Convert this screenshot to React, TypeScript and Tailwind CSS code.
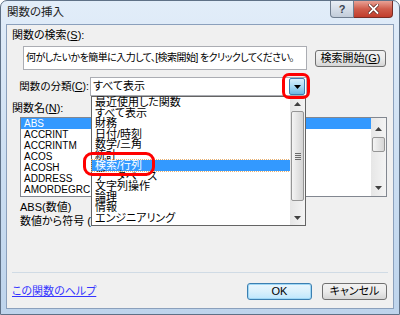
import React from "react";

const F = "font-['Liberation_Sans','Noto_Sans_CJK_JP',sans-serif] [font-feature-settings:'palt']";

function UpArrow() {
  return (
    <svg width="7" height="4" viewBox="0 0 7 4">
      <path d="M0 4 L3.5 0 L7 4Z" fill="#404040" />
    </svg>
  );
}
function DownArrow({ c = "#404040" }: { c?: string }) {
  return (
    <svg width="7" height="4" viewBox="0 0 7 4">
      <path d="M0 0 L3.5 4 L7 0Z" fill={c} />
    </svg>
  );
}

const cats = [
  "最近使用した関数",
  "すべて表示",
  "財務",
  "日付/時刻",
  "数学/三角",
  "統計",
  "検索/行列",
  "データベース",
  "文字列操作",
  "論理",
  "情報",
  "エンジニアリング",
];

const funcs = ["ABS", "ACCRINT", "ACCRINTM", "ACOS", "ACOSH", "ADDRESS", "AMORDEGRC"];

export default function App() {
  return (
    <div className={`w-[400px] h-[315px] ${F} text-[11px] text-black`}>
      <div className="w-[400px] h-[315px] relative overflow-hidden flex flex-col border border-[#5f7187] rounded-t-[7px] bg-gradient-to-b from-[#e2edf9] via-[#cddff2] to-[#bed4ec]">
        {/* Title bar */}
        <div className="h-[23px] flex items-start shrink-0">
          <div className="pl-[6px] pt-[5px] leading-[13px] text-[11.5px] text-[#1e1e1e]">関数の挿入</div>
          <div className="ml-auto mr-[6px] flex">
            <div className="w-[24px] h-[17px] border border-[#6f7d8f] border-t-0 rounded-bl-[4px] bg-gradient-to-b from-[#e9eef5] via-[#d5dde8] to-[#c2ccd9] flex items-center justify-center text-[11px] leading-none font-bold text-[#3a4250]">
              ?
            </div>
            <div className="w-[39px] h-[17px] border border-[#7a2c24] border-l-0 border-t-0 rounded-br-[4px] bg-gradient-to-b from-[#e8a195] via-[#cf5c4b] to-[#c13d2c] flex items-center justify-center">
              <svg width="11" height="10" viewBox="0 0 11 10">
                <path d="M1.5 1 L9.5 9 M9.5 1 L1.5 9" stroke="#5a1f18" strokeWidth="3.2" strokeLinecap="square" />
                <path d="M1.5 1 L9.5 9 M9.5 1 L1.5 9" stroke="#ffffff" strokeWidth="1.8" strokeLinecap="square" />
              </svg>
            </div>
          </div>
        </div>

        {/* Client area */}
        <div className="mx-[5px] mb-[5px] flex-1 bg-[#f0f0f0] border border-[#8ba0bc] relative flex flex-col">
          <div className="pl-[5px] pt-[4px] leading-[13px]">
            関数の検索(<span className="underline">S</span>):
          </div>
          <div className="flex items-start mt-[4px]">
            <div className="ml-[16px] w-[284px] h-[24px] bg-white border border-[#abadb3] pl-[2px] pt-[4px] leading-[13px] text-[10px] tracking-[-0.55px] whitespace-nowrap overflow-hidden">
              何がしたいかを簡単に入力して、[検索開始] をクリックしてください。
            </div>
            <div className="ml-[8px] mt-[4px] w-[71px] h-[17px] border border-[#707070] rounded-[3px] bg-gradient-to-b from-[#f2f2f2] via-[#ebebeb] to-[#d5d5d5] flex items-center justify-center leading-none">
              検索開始(<span className="underline">G</span>)
            </div>
          </div>

          <div className="flex items-center mt-[7px] h-[19px]">
            <div className="w-[83px] shrink-0 pr-[1px] text-right leading-[13px] whitespace-nowrap text-[10.5px]">
              関数の分類(<span className="underline">C</span>):
            </div>
            <div className="w-[217px] h-[19px] bg-white border border-[#abadb3] flex items-center">
              <div className="pl-[2px] leading-[13px]">すべて表示</div>
              <div className="ml-auto mr-[1px] w-[16px] h-[17px] border border-[#3c7fb1] rounded-[2px] bg-gradient-to-b from-[#d9f0fc] via-[#a9dbf6] to-[#6db8e3] flex items-center justify-center">
                <DownArrow c="#000" />
              </div>
            </div>
          </div>

          <div className="pl-[5px] mt-[6px] leading-[13px]">
            関数名(<span className="underline">N</span>):
          </div>

          <div className="ml-[13px] mt-[2px] w-[367px] h-[80px] bg-white border border-[#828790] flex">
            <div className="flex-1 text-[10px] leading-[11px]">
              {funcs.map((f, i) => (
                <div key={f} className={`pl-[3px] h-[11px] ${i === 0 ? "bg-[#3399ff] text-white" : ""}`}>
                  {f}
                </div>
              ))}
            </div>
            <div className="w-[15px] bg-gradient-to-r from-[#e6e6e6] to-[#f4f4f4] flex flex-col items-center">
              <div className="h-[15px] flex items-end pb-[2px]">
                <UpArrow />
              </div>
              <div className="mt-[4px] w-[13px] h-[15px] border border-[#959595] rounded-[2px] bg-gradient-to-r from-[#f4f4f4] to-[#d6d6d6]" />
              <div className="mt-auto h-[15px] flex items-start pt-[5px]">
                <DownArrow />
              </div>
            </div>
          </div>

          <div className="pl-[13px] mt-[4px] leading-[13px]">ABS(数値)</div>
          <div className="pl-[13px] mt-[1px] leading-[13px] whitespace-nowrap">数値から符号 (+</div>

          <div className="flex-1" />
          <div className="mx-[5px] h-px bg-[#d0dbe5]" />

          <div className="flex items-center mt-[10px] mb-[8px] h-[17px]">
            <div className="pl-[5px] text-[#3535ff] underline leading-[13px]">この関数のヘルプ</div>
            <div className="ml-auto w-[65px] h-[17px] border border-[#3c7fb1] rounded-[3px] bg-gradient-to-b from-[#eaf6fd] via-[#d9f0fc] to-[#bee6fd] flex items-center justify-center leading-none shadow-[inset_0_0_0_1px_#9fd7f5]">
              OK
            </div>
            <div className="ml-[10px] mr-[6px] w-[65px] h-[17px] border border-[#707070] rounded-[3px] bg-gradient-to-b from-[#f2f2f2] via-[#ebebeb] to-[#d5d5d5] flex items-center justify-center leading-none">
              キャンセル
            </div>
          </div>

          {/* Dropdown list overlay */}
          <div className="absolute left-[84px] top-[71px] w-[215px] h-[130px] bg-white border border-[#646464] flex">
            <div className="flex-1 pt-[0px]">
              {cats.map((c, i) => (
                <div
                  key={c}
                  className={`h-[10.5px] leading-[11px] pl-[3px] whitespace-nowrap ${i === 6 ? "bg-[#3399ff] text-white outline outline-1 outline-dotted outline-[#e8b070]" : ""}`}
                >
                  {c}
                </div>
              ))}
            </div>
            <div className="w-[15px] bg-gradient-to-r from-[#e6e6e6] to-[#f4f4f4] flex flex-col items-center">
              <div className="h-[14px] flex items-center">
                <UpArrow />
              </div>
              <div className="w-[13px] h-[90px] border border-[#959595] rounded-[2px] bg-gradient-to-r from-[#f4f4f4] to-[#d4d4d4] flex flex-col items-center justify-center gap-[1px]">
                <div className="w-[6px] h-px bg-[#6a6a6a]" />
                <div className="w-[6px] h-px bg-[#6a6a6a]" />
                <div className="w-[6px] h-px bg-[#6a6a6a]" />
                <div className="w-[6px] h-px bg-[#6a6a6a]" />
              </div>
              <div className="mt-auto h-[14px] flex items-center">
                <DownArrow />
              </div>
            </div>
          </div>

          {/* Red annotation marks */}
          <div className="absolute left-[275px] top-[48px] w-[28px] h-[26px] border-[3px] border-[#ff0000] rounded-[7px]" />
          <div className="absolute left-[76px] top-[127px] w-[72px] h-[24px] border-[3px] border-[#ff0000] rounded-[9px]" />
        </div>
      </div>
    </div>
  );
}
